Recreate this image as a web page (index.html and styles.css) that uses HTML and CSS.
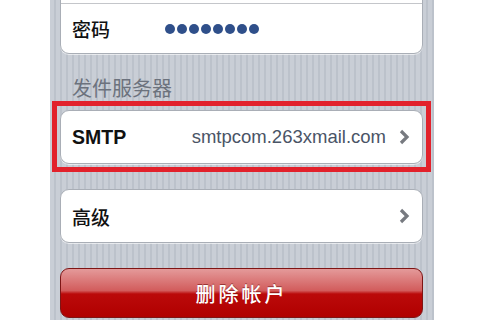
FILE: index.html
```html
<!DOCTYPE html>
<html lang="zh">
<head>
    <meta charset="UTF-8">
    <title>帐户设置</title>
    <link rel="stylesheet" href="styles.css">
</head>
<body>

<div class="phone">
    <div class="group group-top">
        <div class="row row-hidden"></div>
        <div class="row row-password">
            <span class="label">密码</span>
            <span class="dots">
                <span></span><span></span><span></span><span></span>
                <span></span><span></span><span></span><span></span>
            </span>
        </div>
    </div>

    <div class="section-title">发件服务器</div>

    <div class="highlight">
        <div class="group">
            <div class="row row-link">
                <span class="label label-bold">SMTP</span>
                <span class="value">smtpcom.263xmail.com</span>
                <svg class="chevron" width="12" height="16" viewBox="0 0 12 16">
                    <polyline points="3,2 9,8 3,14" fill="none" stroke="#777a80" stroke-width="3.2"/>
                </svg>
            </div>
        </div>
    </div>

    <div class="group group-advanced">
        <div class="row row-link">
            <span class="label">高级</span>
            <svg class="chevron" width="12" height="16" viewBox="0 0 12 16">
                <polyline points="3,2 9,8 3,14" fill="none" stroke="#777a80" stroke-width="3.2"/>
            </svg>
        </div>
    </div>

    <button class="delete-button">删除帐户</button>
</div>

</body>
</html>
```

FILE: styles.css
```css
body {
    margin: 0;
    background-color: #ffffff;
    font-family: "Liberation Sans", "Noto Sans CJK SC", sans-serif;
    overflow: hidden;
}

.phone {
    margin-left: 50px;
    width: 384px;
    height: 320px;
    padding: 0 11px 0 10px;
    box-sizing: border-box;
    background: repeating-linear-gradient(90deg, #c9ced6 0, #c9ced6 4px, #bcc2cb 4px, #bcc2cb 6px);
    overflow: hidden;
}

.group {
    background-color: white;
    border: 1px solid #a9aeb6;
    border-radius: 9px;
    box-shadow: 0 1px 0 rgba(255, 255, 255, 0.6);
}

.group-top {
    margin-top: -40px;
}

.row {
    display: flex;
    align-items: center;
    padding: 0 12px 0 11px;
}

.row-hidden {
    height: 42px;
    border-bottom: 1px solid #c4c6ca;
}

.row-password {
    height: 49px;
}

.label {
    font-family: "Noto Sans CJK SC", sans-serif;
    font-size: 19px;
    font-weight: 500;
    color: #111111;
    width: 93px;
}

.label-bold {
    font-family: "Liberation Sans", Arial, sans-serif;
    font-weight: bold;
    font-size: 19.5px;
    width: auto;
}

.dots {
    display: flex;
    gap: 2px;
}

.dots span {
    width: 10px;
    height: 10px;
    border-radius: 50%;
    background-color: #2f4f8a;
}

.section-title {
    font-family: "Noto Sans CJK SC", sans-serif;
    font-size: 20px;
    color: #6c727d;
    line-height: 20px;
    padding: 24px 12px 0;
    margin-bottom: 3px;
}

.highlight {
    margin: 0 -8px 0 -8px;
    border: 5px solid #e2212b;
    padding: 4px 3px 3px;
}

.row-link {
    height: 52px;
}

.value {
    margin-left: auto;
    font-size: 18.5px;
    color: #4a5466;
}

.chevron {
    margin-left: 12px;
}

.row-link .label + .chevron {
    margin-left: auto;
}

.group-advanced {
    margin-top: 17px;
}

.delete-button {
    display: block;
    width: 100%;
    height: 50px;
    margin-top: 25px;
    border: 1px solid #7e1515;
    border-radius: 9px;
    background: linear-gradient(180deg, #e49a9a 0%, #d25c5c 45%, #bb0a0a 52%, #b00000 100%);
    color: white;
    font-family: "Noto Sans CJK SC", sans-serif;
    font-size: 20px;
    font-weight: 500;
    letter-spacing: 3px;
    text-shadow: 0 -1px 0 rgba(90, 0, 0, 0.5);
    padding: 0;
}
```
